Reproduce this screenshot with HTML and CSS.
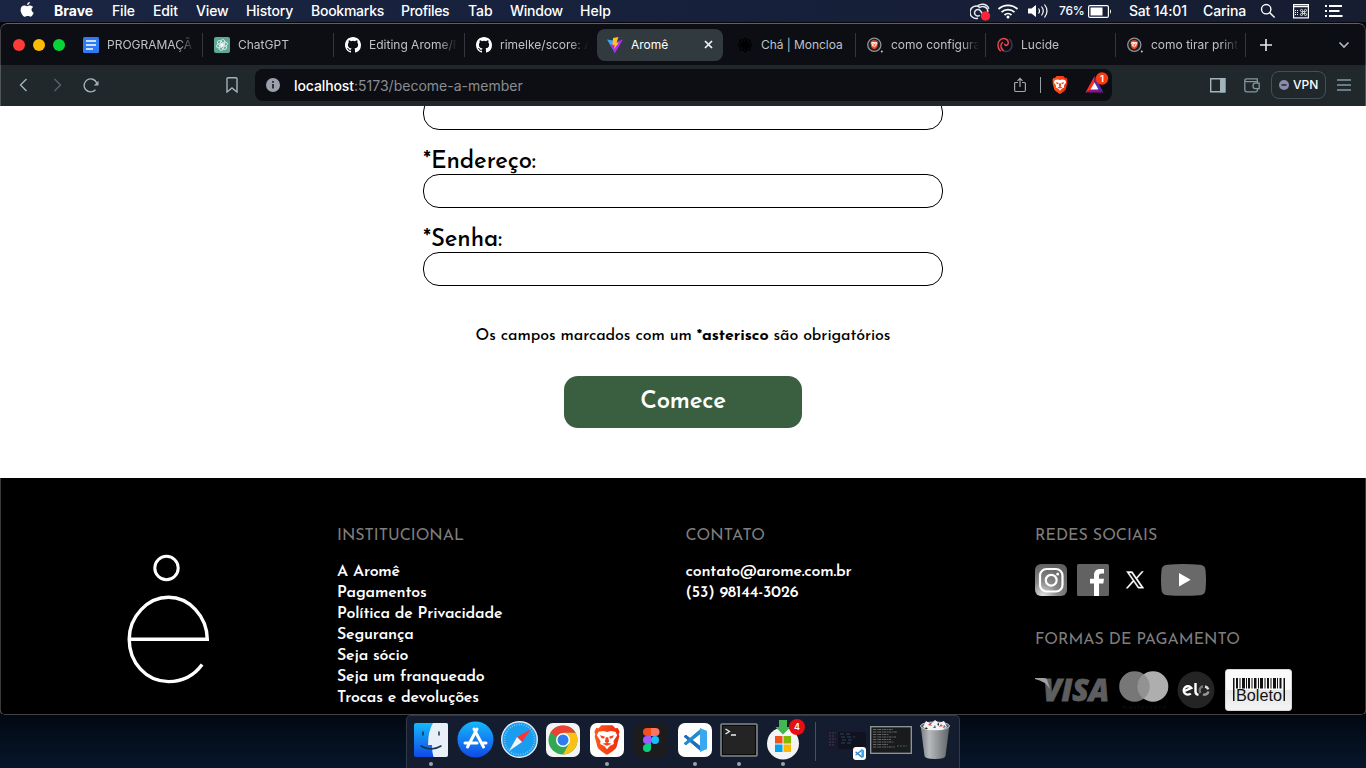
FILE: index.html
```html
<!DOCTYPE html>
<html lang="pt-BR">
<head>
<meta charset="utf-8">
<title>Aromê</title>
<link rel="stylesheet" href="styles.css">
</head>
<body>
<svg class="defs" width="0" height="0">
  <defs>
    <linearGradient id="gBrave" x1="0" x2="1"><stop offset="0" stop-color="#ff5a1c"/><stop offset="1" stop-color="#f02a10"/></linearGradient>
    <linearGradient id="gBlue" x2="0" y2="1"><stop offset="0" stop-color="#16b8fb"/><stop offset="1" stop-color="#1049e8"/></linearGradient>
    <linearGradient id="gTrash" x2="1"><stop offset="0" stop-color="#777c80"/><stop offset=".3" stop-color="#b6babd"/><stop offset=".65" stop-color="#8b8f92"/><stop offset="1" stop-color="#5e6366"/></linearGradient>
    <radialGradient id="gInsta" cx=".25" cy="1" r="1"><stop offset="0" stop-color="#e2e2e2"/><stop offset=".45" stop-color="#898989"/><stop offset="1" stop-color="#626262"/></radialGradient>
    <symbol id="github" viewBox="0 0 16 16"><path fill="#fff" d="M8 0C3.58 0 0 3.58 0 8c0 3.54 2.29 6.53 5.47 7.59.4.07.55-.17.55-.38v-1.49c-2.01.37-2.53-.49-2.69-.94-.09-.23-.48-.94-.82-1.13-.28-.15-.68-.52-.01-.53.63-.01 1.08.58 1.23.82.72 1.21 1.87.87 2.33.66.07-.52.28-.87.51-1.07-1.78-.2-3.64-.89-3.64-3.95 0-.87.31-1.59.82-2.15-.08-.2-.36-1.02.08-2.12 0 0 .67-.21 2.2.82a7.4 7.4 0 0 1 4 0c1.53-1.04 2.2-.82 2.2-.82.44 1.1.16 1.92.08 2.12.51.56.82 1.27.82 2.15 0 3.07-1.87 3.75-3.65 3.95.29.25.54.73.54 1.48v2.2c0 .21.15.46.55.38A8 8 0 0 0 16 8c0-4.42-3.58-8-8-8z"/></symbol>
    <symbol id="lion" viewBox="0 0 28 32"><path fill="url(#gBrave)" d="M8 0h12l3 3.400 2.600-.4 2 4-1 3 .7 2-3 11.500c-1 3-8 7-10.300 8.500C11.700 30.500 4.700 26.500 3.700 23.500L.700 12l.7-2-1-3 2-4L5 3.400z"/><path fill="#fff" d="M5 7l5-.7 4 1 4-1 5 .7 2 4-4 6 .4 3.300-4.400 2.200L14 26l-3-3.500-4.400-2.200.4-3.300-4-6z"/><path fill="#f8431a" d="M6.500 11l5 1.200-.5 2.500-3-.8zM21.500 11l-5 1.200.5 2.500 3-.8zM12.700 13h2.600l1 5-2.300 1.600L11.700 18zM9 20l5-1 5 1-5 2.300z"/></symbol>
    <symbol id="braveTab" viewBox="0 0 16 16"><circle cx="7.300" cy="7.800" r="6.600" fill="#1c2024" stroke="#8e9296" stroke-width="1.300"/><use href="#lion" x="3.300" y="3.100" width="8" height="9.300"/><circle cx="14.800" cy="14.500" r="1" fill="#ccc"/></symbol>
    <symbol id="vscode" viewBox="0 0 24 24"><path fill="#1c6fb8" stroke="#1c6fb8" stroke-width="1" stroke-linejoin="round" d="M1 8.500l2-1.300L18 19v4z"/><path fill="#2489ca" stroke="#2489ca" stroke-width="1" stroke-linejoin="round" d="M1 15.500l2 1.300L18 5V1z"/><path fill="#39a8ef" d="M17 0l7 3v18l-7 3z"/></symbol>
  </defs>
</svg>

<header class="menubar">
  <nav class="menus">
    <span class="apple"><svg width="14" height="16" viewBox="0 0 14 16"><path fill="#fff" d="M9.800 0c.1 1.300-1 3-2.700 3.100C6.900 1.700 8.300.2 9.800 0zM7.300 4.200c.7 0 1.500-.8 2.900-.7 1.200.1 2.300.6 2.900 1.600-2.300 1.500-1.900 4.600.6 5.600-.5 1.500-1.700 4-3.200 4-1 0-1.500-.6-2.800-.6-1.200 0-1.700.6-2.700.6C3.200 14.700.600 11 .600 7.900c0-2.800 1.800-4.300 3.500-4.300 1.400 0 2.400.600 3.200.600z"/></svg></span>
    <b class="m-brave">Brave</b><span class="m-file">File</span><span class="m-edit">Edit</span><span class="m-view">View</span><span class="m-history">History</span><span class="m-bookmarks">Bookmarks</span><span class="m-profiles">Profiles</span><span class="m-tab">Tab</span><span class="m-window">Window</span><span>Help</span>
  </nav>
  <div class="status">
    <svg class="s-cloud" width="22" height="18" viewBox="0 0 22 18"><g fill="none" stroke="#e8ebf2" stroke-width="1.500"><path d="M8 15.200A6.200 6.200 0 1 1 9.500 4M7 3.500c3-3.500 10-3 11.800 2.200"/><path d="M9.800 12.400a3.300 3.300 0 1 1 .8-4.400l2.400 3.500M9 5c4-3 9-1 8.800 4"/></g><circle cx="15.500" cy="13" r="4.700" fill="#ff2338"/></svg>
    <svg class="s-wifi" width="22" height="16" viewBox="0 0 22 16"><g fill="none" stroke="#fff" stroke-width="1.800"><path d="M1.500 6a14 14 0 0 1 19 0M4.500 9.100a9.600 9.600 0 0 1 13 0M7.500 12a5.200 5.200 0 0 1 7 0"/></g><circle cx="11" cy="14" r="1.500" fill="#fff"/></svg>
    <svg class="s-sound" width="22" height="16" viewBox="0 0 22 16"><path fill="#fff" d="M1 5.500h3.500L9 2v12l-4.500-3.500H1z"/><g fill="none" stroke="#fff" stroke-width="1.200"><path d="M11.500 5.500q2 2.500 0 5M14.500 3.500q3.500 4.500 0 9M17.500 1.500q5 6.500 0 13"/></g></svg>
    <span class="s-pct">76%</span>
    <svg class="s-batt" width="24" height="13" viewBox="0 0 24 13"><rect x=".6" y=".6" width="19.800" height="11.800" rx="1.500" fill="none" stroke="#fff" stroke-width="1.200"/><path fill="#fff" d="M2.500 2.500h12v8h-12zM22 4q2 2.500 0 5z"/></svg>
    <span class="s-clock">Sat 14:01</span><span class="s-user">Carina</span>
    <svg class="s-find" width="16" height="16" viewBox="0 0 16 16"><g fill="none" stroke="#fff" stroke-width="1.400"><circle cx="6.200" cy="6.200" r="4.700"/><path d="M9.600 9.600l5 5"/></g></svg>
    <svg class="s-kbd" width="16" height="15" viewBox="0 0 16 15"><rect x=".6" y=".6" width="14.800" height="13.300" fill="none" stroke="#fff" stroke-width="1.200"/><path stroke="#fff" stroke-width="1.500" d="M1 2.500h14"/><path stroke="#fff" stroke-dasharray="1 1" d="M2 6.500h4M2 8.500h4M2 10.500h4"/><g fill="none" stroke="#fff" stroke-width=".8"><circle cx="8.500" cy="6.500" r="1.100"/><circle cx="12.500" cy="6.500" r="1.100"/><circle cx="8.500" cy="10.500" r="1.100"/><circle cx="12.500" cy="10.500" r="1.100"/><path d="M9.500 7.500h2v2h-2z"/></g></svg>
    <svg class="s-list" width="18" height="14" viewBox="0 0 18 14"><path stroke="#fff" stroke-width="1.800" d="M4 2h13M4 7h10.500M4 12h13.500M0 2h2M0 7h2M0 12h2"/></svg>
  </div>
</header>

<section class="window">
  <div class="tabstrip">
    <div class="lights"><i class="red"></i><i class="yellow"></i><i class="green"></i></div>
    <div class="tabs">
      <div class="tab"><svg width="16" height="16"><rect width="16" height="16" rx="1.500" fill="#2f7bf5"/><path stroke="#fff" stroke-width="1.700" d="M3 4h10M3 8h10M3 12h7"/></svg><span class="title">PROGRAMAÇÃ</span></div>
      <div class="tab"><svg width="16" height="16" viewBox="0 0 16 16"><rect width="16" height="16" rx="2" fill="#5fa896"/><g fill="none" stroke="#fff" stroke-width=".7"><ellipse cx="8.800" cy="5.600" rx="2.100" ry="3.200"/><ellipse cx="8.800" cy="5.600" rx="2.100" ry="3.200" transform="rotate(60 8 8)"/><ellipse cx="8.800" cy="5.600" rx="2.100" ry="3.200" transform="rotate(120 8 8)"/><ellipse cx="8.800" cy="5.600" rx="2.100" ry="3.200" transform="rotate(180 8 8)"/><ellipse cx="8.800" cy="5.600" rx="2.100" ry="3.200" transform="rotate(240 8 8)"/><ellipse cx="8.800" cy="5.600" rx="2.100" ry="3.200" transform="rotate(300 8 8)"/></g></svg><span class="title">ChatGPT</span></div>
      <div class="tab"><svg width="16" height="16"><use href="#github"/></svg><span class="title">Editing Arome/R</span></div>
      <div class="tab plain"><svg width="16" height="16"><use href="#github"/></svg><span class="title">rimelke/score: A</span></div>
      <div class="tab plain active"><svg width="16" height="16" viewBox="0 0 16 16"><path fill="#3ea5f5" d="M0 2.400l8 1.400v3L8 16z"/><path fill="#b02cf5" d="M16 2.400L8 16 3.500 8l5-3z"/><path fill="#ffc31a" d="M11.500 0L6 1l-.5 7h2.200L7 12l4.800-6.300H9.500z"/></svg><span class="title">Aromê</span><svg class="close" width="9" height="9"><path stroke="#f2f4f5" stroke-width="1.700" d="M1 1l7 7M8 1L1 8"/></svg></div>
      <div class="tab"><svg width="16" height="16" viewBox="0 0 16 16"><g fill="none" stroke="#010102" stroke-width="1.200"><path d="M8 1l2 2-2 2-2-2zM13 6l2 2-2 2-2-2zM3 6l2 2-2 2-2-2zM8 11l2 2-2 2-2-2zM3 3h3v3H3zM10 3h3v3h-3zM3 10h3v3H3zM10 10h3v3h-3z"/></g><circle cx="8" cy="8" r="3.500" fill="#010102"/></svg><span class="title full">Chá | Moncloa</span></div>
      <div class="tab"><svg width="16" height="16"><use href="#braveTab"/></svg><span class="title">como configura</span></div>
      <div class="tab"><svg width="16" height="16" viewBox="0 0 16 16"><g fill="none" stroke-width="1.500" stroke-linecap="round"><path stroke="#e8434e" d="M3.300 13.800C.2 11 .2 5.500 3 3 6 .2 11 1.500 11.300 5.500c.1 3-3 3.800-3.500 1.800"/><path stroke="#363a5e" d="M12.700 2.200c3 2.800 3 8.300.3 10.800-3 2.800-8 1.500-8.300-2.500"/><path stroke="#e8434e" d="M6.200 13.500C3 11.500 3.500 7 5.500 5.500"/></g></svg><span class="title">Lucide</span></div>
      <div class="tab"><svg width="16" height="16"><use href="#braveTab"/></svg><span class="title">como tirar print</span></div>
    </div>
    <svg class="plus" width="12" height="12"><path stroke="#e8eaec" stroke-width="1.600" d="M6 0v12M0 6h12"/></svg>
    <svg class="chev" width="12" height="8"><path fill="none" stroke="#a9b9bf" stroke-width="1.700" d="M1.500 1.500L6 6l4.500-4.500"/></svg>
  </div>

  <div class="toolbar">
    <svg class="back" width="9" height="14"><path fill="none" stroke="#9fb4bb" stroke-width="1.400" d="M7.500 1L1.500 7l6 6"/></svg>
    <svg class="fwd" width="9" height="14"><path fill="none" stroke="#56636a" stroke-width="1.400" d="M1.500 1l6 6-6 6"/></svg>
    <svg class="reload" width="17" height="16"><path fill="none" stroke="#9fb4bb" stroke-width="1.400" d="M12.500 12.700a6.500 6.500 0 1 1 1.200-6.700"/><path fill="#9fb4bb" d="M15.500 3.800v4.700h-4.700z"/></svg>
    <svg class="mark" width="12" height="16"><path fill="none" stroke="#9fb4bb" stroke-width="1.400" d="M1 1.700q0-1 1-1h8q1 0 1 1V15l-5-4-5 4z"/></svg>
    <div class="address">
      <svg class="info" width="14" height="14"><circle cx="7" cy="7" r="7" fill="#9ca0ad"/><path stroke="#0d0e14" stroke-width="1.500" d="M7 6v4.500M7 3v1.700"/></svg>
      <span class="url"><b>localhost</b>:5173/become-a-member</span>
      <svg class="share" width="12" height="16"><path fill="none" stroke="#a3a6ab" stroke-width="1.200" d="M4 5.500H1.600q-1 0-1 1V13q0 1.500 1 1.500h8.800q1 0 1-1.500V6.500q0-1-1-1H8M6 10V1.500M3.500 3.800L6 1.300l2.500 2.500"/></svg>
      <i class="bar"></i>
      <svg class="shield" width="16" height="18"><use href="#lion"/></svg>
      <svg class="bat" width="24" height="24" viewBox="0 0 24 24"><path fill="#ff2d20" d="M9.500 5L.5 21.500l9-4z"/><path fill="#86148f" d="M.5 21.500h18l-9-4.500z"/><path fill="#5c2cb0" d="M9.500 5l9 16.500-9-5z"/><path fill="#fff" d="M9.500 11.500l4 7h-8z"/><circle cx="17" cy="7.500" r="6.200" fill="#fb3b0c"/><text x="17" y="11" class="count">1</text></svg>
    </div>
    <svg class="side" width="16" height="15"><path fill="none" stroke="#a2b5bc" stroke-width="1.400" d="M.7.7h14v13H.7z"/><path fill="#a2b5bc" d="M10 0h5.500v14.500H10z"/></svg>
    <svg class="wallet" width="16" height="15"><g fill="none" stroke="#82969e" stroke-width="1.300"><path d="M13.500 5V3.700H2.500q-1.700-.2-1.700-1.500T2.500.8h10.800v2.900M.8 2.500v9.300q0 2 2 2h9q1.700 0 1.700-1.700V11"/><path d="M15.200 5.200v5.400h-4q-2.200-.2-2.200-2.700t2.200-2.700z"/></g></svg>
    <div class="vpn"><svg width="10" height="10"><circle cx="5" cy="5" r="5" fill="#888ca8"/><path stroke="#20282b" stroke-width="1.500" d="M2.500 5h5"/></svg>VPN</div>
    <svg class="burger" width="14" height="12"><path stroke="#8298a0" stroke-width="1.300" d="M0 1h14M0 6h14M0 11h14"/></svg>
  </div>

  <div class="page">
    <main>
      <form class="member">
        <input type="text">
        <label for="end">*Endereço:</label><input id="end" type="text">
        <label for="senha">*Senha:</label><input id="senha" type="password">
        <p class="note">Os campos marcados com um <b>*asterisco</b> são obrigatórios</p>
        <button type="button">Comece</button>
      </form>
    </main>
    <footer>
      <div class="brand"><svg width="84" height="132" viewBox="0 0 84 132"><g fill="none" stroke="#fff" stroke-width="3"><circle cx="39.500" cy="14" r="11.700"/><path stroke-width="3.400" d="M2.500 85.300H80.300C80 62 62 43.300 41.500 43.300S2.200 62 2.200 85.300s17 42.300 39.300 42.300c14 0 26-6.600 33.600-17.100"/></g></svg></div>
      <div class="col">
        <h2>INSTITUCIONAL</h2>
        <ul><li>A Aromê</li><li>Pagamentos</li><li>Política de Privacidade</li><li>Segurança</li><li>Seja sócio</li><li>Seja um franqueado</li><li>Trocas e devoluções</li></ul>
      </div>
      <div class="col">
        <h2>CONTATO</h2>
        <ul><li>contato@arome.com.br</li><li>(53) 98144-3026</li></ul>
      </div>
      <div class="col">
        <h2>REDES SOCIAIS</h2>
        <div class="social">
          <svg width="32" height="32"><rect width="32" height="32" rx="6" fill="url(#gInsta)"/><g fill="none" stroke="#fff" stroke-width="2.200"><rect x="5" y="5" width="22.500" height="22.500" rx="6.500"/><circle cx="16.200" cy="16.200" r="5.400"/></g><circle cx="22.700" cy="10" r="1.500" fill="#fff"/></svg>
          <svg width="32" height="32"><rect width="32" height="32" rx="1.500" fill="#626262"/><path fill="#fff" d="M17 32V19.500h-4v-4.700h4v-3.500C17 7 19.500 5 23 5h4v4.500h-2.500c-2 0-2.500 1-2.500 2.500v2.800h5l-.7 4.700H22V32z"/></svg>
          <svg width="32" height="32"><path fill="#fff" stroke="#fff" stroke-width=".4" fill-rule="evenodd" d="M7.500 7.500h5.800l4.100 5.900 5.300-5.900h1.700l-6.200 7 6.700 9.700h-5.800l-4.500-6.500-5.800 6.500H7.100l6.700-7.600zM10 8.900l9.800 14h2.500L12.600 8.900z"/></svg>
          <svg width="45" height="32"><path fill="#696969" d="M6 .8Q22 -.6 39 .8q5 .5 5.500 5.200 1 10 0 20-.5 4.700-5.500 5.200-16.500 1.200-33 0-5-.5-5.500-5.200Q-.5 16 .5 6 1 1.300 6 .8z"/><path fill="#fff" d="M18 9v13.500l11.700-6.700z"/></svg>
        </div>
        <h2>FORMAS DE PAGAMENTO</h2>
        <div class="pay">
          <svg class="visa" width="75" height="26"><text x="8" y="23" textLength="66" lengthAdjust="spacingAndGlyphs">VISA</text><path fill="#a0a0a0" d="M0 0h9q3 0 3.500 3l2.500 8Q10 3 0 1z"/></svg>
          <svg class="mc" width="50" height="40"><circle cx="15.500" cy="15.500" r="15.300" fill="#777"/><circle cx="34" cy="15.500" r="15.300" fill="#aeaeae"/><path fill="#929292" d="M24.700 3.300a15.300 15.300 0 0 1 0 24.400 15.300 15.300 0 0 1 0-24.400z"/><text x="3" y="38" textLength="44">mastercard</text></svg>
          <svg class="elo" width="38" height="38"><circle cx="19" cy="19" r="18.500" fill="#242424"/><g fill="none" stroke="#fff" stroke-width="2.400"><path d="M6.300 20.500l8-3.500a4.200 4.200 0 1 0-.5 5.500M18.500 12v8.500q0 3 3 3.200"/><path d="M23.500 22a4.200 4.200 0 0 1 2.500-6.700" stroke="#777"/><path d="M28 15.500a4.200 4.200 0 0 1 3.300 2.800" stroke="#ddd"/><path d="M31.500 20.500a4.200 4.200 0 0 1-5.500 2.900" stroke="#999"/></g></svg>
          <div class="boleto"><svg width="53" height="26"><path fill="#111" d="M0 0h1.500v23H0zM50.500 0H52v23h-1.500zM3 0h2v10.500H3zM6.500 0h1v10.500h-1zM9 0h3v10.500H9zM13 0h1v10.500h-1zM15 0h2v10.500h-2zM18.500 0h1v10.500h-1zM21 0h2.500v10.500H21zM25 0h1v10.500h-1zM27 0h3v10.500h-3zM31.500 0h1v10.500h-1zM34 0h2v10.500h-2zM37.500 0h1v10.500h-1zM40 0h3v10.500h-3zM44 0h1v10.500h-1zM46.500 0h2v10.500h-2z"/><text x="3" y="22.500" textLength="46" lengthAdjust="spacingAndGlyphs">Boleto</text></svg></div>
        </div>
      </div>
    </footer>
  </div>
</section>

<div class="dock">
  <div class="app on"><svg width="34" height="34"><rect width="34" height="34" rx="2" fill="url(#gBlue)"/><path fill="#e9eff6" d="M19 0h13q2 0 2 2v30q0 2-2 2H19.500q-1.500-5-1.500-12h-4Q14 8 19 0z"/><path fill="none" stroke="#173452" stroke-width="1.500" stroke-linecap="round" d="M9 9v3M25 9v3M7 23q10 6 20 0"/></svg></div>
  <div class="app"><svg class="lift" width="37" height="37"><circle cx="18.500" cy="18.500" r="18" fill="url(#gBlue)"/><path fill="none" stroke="#fff" stroke-width="3" stroke-linecap="round" d="M17 8l9.500 18M20 8L10.500 26M8 22h12M25 22h4"/></svg></div>
  <div class="app"><svg class="lift" width="37" height="37"><circle cx="18.500" cy="18.500" r="17.800" fill="#1a9cf1" stroke="#e5eaf0" stroke-width="1.400"/><circle cx="18.500" cy="18.500" r="15" fill="none" stroke="#8fd0fb" stroke-width="1.500" stroke-dasharray=".8 1.600"/><path fill="#f33" d="M30 8L16 16l5 5z"/><path fill="#f4f5f7" d="M8 30l8-14 5 5z"/></svg></div>
  <div class="app"><svg width="34" height="34"><rect width="34" height="34" rx="7" fill="#f4f4f4"/><circle cx="17" cy="17" r="14.500" fill="#32a852"/><path fill="#ea4335" d="M17 17L4.400 9.800A14.500 14.500 0 0 1 29.600 9.800H17z"/><path fill="#fbc116" d="M17 9.800h12.600A14.500 14.500 0 0 1 17 31.500l6.200-11z"/><circle cx="17" cy="17" r="7" fill="#fff"/><circle cx="17" cy="17" r="5.500" fill="#2e7cf0"/></svg></div>
  <div class="app on"><svg width="34" height="34"><rect width="34" height="34" rx="7" fill="#fff"/><use href="#lion" x="4" y="2" width="26" height="30"/></svg></div>
  <div class="app"><svg width="34" height="34"><rect width="34" height="34" rx="7" fill="#1c1c1e"/><path fill="#f24e1e" d="M17 5h-4a4 4 0 0 0 0 8h4z"/><path fill="#ff7262" d="M17 5h4.500a4 4 0 0 1 0 8H17z"/><path fill="#a259ff" d="M17 13h-4a4 4 0 0 0 0 8h4z"/><circle cx="21" cy="17" r="4" fill="#1abcfe"/><path fill="#0acf83" d="M17 21h-4a4 4 0 1 0 4 4z"/></svg></div>
  <div class="app on"><svg width="34" height="34"><rect width="34" height="34" rx="7" fill="#fff"/><use href="#vscode" x="5" y="5" width="24" height="24"/></svg></div>
  <div class="app on"><svg width="38" height="34"><rect x="1" y="1" width="36" height="32" rx="1" fill="#242424" stroke="#7e868a" stroke-width="1.600"/><rect x="2.500" y="2.500" width="33" height="29" fill="none" stroke="#0a0a0a"/><path fill="none" stroke="#eee" stroke-width="1.300" d="M5.500 6l4 2.500-4 2.500M11 12h5"/></svg></div>
  <div class="app on"><svg width="40" height="42" viewBox="0 0 40 42" class="ms"><circle cx="20" cy="24.500" r="16" fill="#f4f4f5"/><path fill="#f1511b" d="M12 17h7.500v7.500H12z"/><path fill="#7fba00" d="M20.500 17H28v7.500h-7.500z"/><path fill="#00a3ee" d="M12 25.500h7.500V33H12z"/><path fill="#fbb900" d="M20.500 25.500H28V33h-7.500z"/><path fill="#42b650" d="M16 1h8v7h3.500L20 15.500 12.500 8H16z"/></svg><em class="badge">4</em></div>
  <i class="sep"></i>
  <div class="mini code"><svg width="39" height="21"><rect width="39" height="21" fill="#171a2f"/><path fill="#10121f" d="M11 2h28v17H11z"/><path stroke="#60405c" stroke-width=".8" stroke-dasharray="2 1" d="M2 3h7M2 6h5M2 9h7M2 12h5M2 15h6"/><path stroke="#34566d" stroke-width=".8" stroke-dasharray="4 2" d="M13 4h11M14 7h14M15 10h10M14 13h12"/></svg><svg class="mbadge" width="13" height="13"><rect width="13" height="13" rx="3" fill="#fff"/><use href="#vscode" x="2" y="2" width="9" height="9"/></svg></div>
  <div class="mini"><svg width="42" height="28"><rect x=".7" y=".7" width="40.600" height="26.600" fill="#1a1b1c" stroke="#939a9e" stroke-width="1.300"/><path stroke="#777a7c" stroke-width=".8" stroke-dasharray="3 .7 1 .5" d="M3 3.500h20M3 6h24M3 8.500h16M3 11h23M3 13.500h18M3 16h21M3 18.500h15M3 21h22"/><path stroke="#366b42" stroke-dasharray="2 1" d="M27 20h10"/></svg></div>
  <div class="trash"><svg width="32" height="40"><path fill="url(#gTrash)" d="M1.500 5h29l-4 31q-.5 3-10.500 3T5.500 36z"/><ellipse cx="16" cy="6" rx="14.500" ry="4" fill="#555b5f" stroke="#c9ccce"/><path fill="#f3f3f3" d="M4 7l3-6 5 3 4-4 4 3 5-2 3 6-5 3H9z"/><path fill="#d34b4b" d="M9 5l2-2 2 3zM20 7l2-3 2 2z"/><path fill="#2f73b6" d="M14 8l2-3 1 3zM24 8l1-3 2 2z"/><path fill="#222" d="M7 7l2 2H6zM18 4l2-1v3z"/></svg></div>
</div>
</body>
</html>
```

FILE: styles.css
```css
* { box-sizing: border-box; }
body {
  margin: 0;
  width: 1366px;
  height: 768px;
  overflow: hidden;
  position: relative;
  display: flex;
  flex-direction: column;
  background: linear-gradient(#020812 715px, #07162b);
  font-family: Inter, sans-serif;
}
svg { display: block; flex: none; }
.defs { position: absolute; }

/* system menu bar */
.menubar {
  height: 23px;
  flex: none;
  display: flex;
  justify-content: space-between;
  background: linear-gradient(90deg, #1a2543, #16203a 55%, #161d31);
  border-bottom: 1px solid #05070c;
  color: #fff;
  font-size: 14px;
  font-weight: 500;
  line-height: 22px;
  white-space: nowrap;
}
.menus { display: flex; padding-left: 20px; }
.apple { width: 34px; padding-top: 2px; }
.m-brave { width: 58px; font-weight: 700; }
.m-file { width: 41px; }
.m-edit { width: 43px; }
.m-view { width: 50px; }
.m-history { width: 65px; }
.m-bookmarks { width: 90px; letter-spacing: -.25px; }
.m-profiles { width: 67px; letter-spacing: -.3px; }
.m-tab { width: 42px; }
.m-window { width: 70px; letter-spacing: -.25px; }
.m-history, .m-view, .m-edit, .m-file { letter-spacing: -.15px; }
.status { display: flex; align-items: center; width: 396px; }
.s-cloud { margin: 2px 5px 0 0; }
.s-wifi { margin-right: 8px; }
.s-sound { margin-right: 10px; }
.s-pct { width: 29px; font-size: 12px; letter-spacing: -.2px; }
.s-batt { margin-right: 17px; }
.s-clock { width: 74px; letter-spacing: -.2px; }
.s-user { width: 57px; letter-spacing: -.1px; }
.s-find { margin-right: 17px; }
.s-kbd { margin-right: 16px; }

/* browser window; its hairline edge is translucent and lies over the page */
.window {
  position: relative;
  width: 1366px;
  height: 692px;
  flex: none;
  padding: 1px 0;
  border-radius: 7px 7px 5px 5px;
  overflow: hidden;
  background: #0d0e13;
}
.window::after {
  content: "";
  position: absolute;
  inset: 0;
  border: 1px solid rgba(255, 255, 255, .22);
  border-top-color: rgba(255, 255, 255, .34);
  border-radius: 7px 7px 5px 5px;
  pointer-events: none;
}
.tabstrip { height: 41px; padding-left: 1px; display: flex; align-items: center; }
.lights { width: 71px; display: flex; gap: 8px; padding-left: 12px; flex: none; }
.lights i { width: 12px; height: 12px; border-radius: 50%; }
.red { background: #ff3b38; }
.yellow { background: #fdbc05; }
.green { background: #07d438; }
.tabs { width: 1174px; display: grid; grid-template-columns: 131px 131px 131px 131px repeat(5, 130px); flex: none; }
.tab {
  height: 24px;
  display: flex;
  align-items: center;
  gap: 8px;
  padding-left: 11px;
  border-right: 1px solid #33373b;
  color: #bfc2c5;
  font-size: 12px;
  min-width: 0;
}
.title {
  width: 88px;
  overflow: hidden;
  white-space: nowrap;
  line-height: 18px;
  -webkit-mask-image: linear-gradient(90deg, #000 70px, transparent 88px);
  mask-image: linear-gradient(90deg, #000 70px, transparent 88px);
}
.full { -webkit-mask-image: none; mask-image: none; letter-spacing: -.05px; }
.plain { border-right-color: transparent; }
.active {
  height: 32px;
  width: 126px;
  margin: -4px 0 -4px 1px;
  padding-left: 10px;
  background: #303a3f;
  border: 0;
  border-radius: 8px;
  color: #fff;
}
.active .title { width: 65px; -webkit-mask-image: none; mask-image: none; }
.plus { margin-left: 14px; }
.chev { margin-left: 66px; }

.toolbar { height: 41px; padding-left: 1px; display: flex; align-items: center; background: #20282b; }
.toolbar > svg { margin-top: -1px; }
.toolbar .back { margin-left: 18px; }
.toolbar .fwd { margin-left: 25px; }
.toolbar .reload { margin-left: 21px; }
.toolbar .mark { margin-left: 126px; }
.address {
  width: 857px;
  height: 32px;
  margin: -1px 0 0 17px;
  padding-left: 11px;
  display: flex;
  align-items: center;
  background: #0d0e13;
  border-radius: 8px;
}
.url { width: 720px; margin-left: 14px; color: #898c91; font-size: 14px; letter-spacing: .01px; }
.url b { color: #fff; font-weight: 500; letter-spacing: -.1px; }
.bar { width: 1px; height: 16px; margin: 0 11px 0 14px; background: #9a9da2; }
.bat { margin: -4px 0 0 17px; }
.count { fill: #fff; font-size: 9.500px; font-weight: 600; text-anchor: middle; }
.toolbar .side { margin-left: 98px; }
.toolbar .wallet { margin-left: 18px; }
.vpn {
  width: 55px;
  height: 28px;
  margin: -2px 0 0 11px;
  padding-left: 7px;
  display: flex;
  align-items: center;
  gap: 4px;
  border: 1px solid #435055;
  border-radius: 8px;
  color: #fff;
  font-size: 12px;
  font-weight: 500;
}
.toolbar .burger { margin-left: 11px; }

/* web page */
.page { height: 608px; overflow: hidden; background: #fff; font-family: "Josefin Sans", Lato, sans-serif; }
main { height: 372px; overflow: hidden; }
.member { width: 520px; margin: -10px auto 0; display: flex; flex-direction: column; align-items: center; }
input { width: 520px; height: 34px; border: 1px solid #000; border-radius: 16px; background: #fff; }
label { width: 520px; height: 44px; padding-top: 16px; font-size: 24px; line-height: 32px; font-weight: 500; letter-spacing: -.12px; }
.note { margin: 38px 0 0; font-size: 16px; line-height: 24px; font-weight: 500; letter-spacing: -.08px; white-space: nowrap; }
.note b { font-weight: 700; }
button {
  width: 238px;
  height: 52px;
  margin-top: 28px;
  padding: 0;
  border: 0;
  border-radius: 14px;
  background: #3a5f40;
  color: #fff;
  font: 600 24px "Josefin Sans", Lato, sans-serif;
  letter-spacing: -.25px;
}
footer { height: 237px; display: grid; grid-template-columns: 337px 348.500px 349.500px 1fr; background: #000; color: #fff; }
.brand { padding: 76px 0 0 127px; }
.col { padding-top: 47px; }
h2 { margin: 0; color: #7e7e7e; font-size: 16px; line-height: 22px; font-weight: 400; white-space: nowrap; }
ul { margin: 15px 0 0; padding: 0; list-style: none; font-size: 16px; font-weight: 600; line-height: 21px; letter-spacing: -.19px; }
.social { display: flex; gap: 10px; margin: 17px 0 33px; }
.pay { display: flex; align-items: flex-start; margin-top: 18px; }
.visa { margin-top: 9px; }
.visa text { fill: #5e5e5e; stroke: #5e5e5e; stroke-width: .8px; font: italic 800 30px "Open Sans", sans-serif; }
.mc { margin: 2px 0 0 9px; }
.mc text { fill: #121212; font-size: 6px; }
.elo { margin: 2px 0 0 8px; }
.boleto {
  width: 67px;
  height: 42px;
  margin-left: 10px;
  padding: 8px 0 0 7px;
  border-radius: 3px;
  border: 1px solid #d6d6d6;
  background: linear-gradient(#fafafa 50%, #e6e6e6 51%, #f4f4f4);
}
.boleto text { font: 16px "Liberation Sans", sans-serif; fill: #111; }

/* dock floats over the desktop wallpaper */
.dock {
  position: absolute;
  left: 406px;
  bottom: 0;
  width: 554px;
  height: 53px;
  padding-left: 2px;
  display: flex;
  background: #141d2f;
  border: 1px solid #313a49;
  border-bottom: 0;
  border-radius: 5px 5px 0 0;
}
.app { position: relative; width: 44px; height: 52px; padding-top: 7px; display: flex; flex-direction: column; align-items: center; flex: none; }
.lift { margin-top: -2px; }
.ms { margin-top: -4px; }
.on::after { content: ""; position: absolute; left: 20px; top: 46px; width: 4px; height: 4px; border-radius: 50%; background: #9ba1ae; }
.badge { position: absolute; left: 28px; top: 3px; width: 16px; height: 16px; border-radius: 50%; background: #e60f12; color: #fff; font-style: normal; font-size: 9px; font-weight: 600; line-height: 16px; text-align: center; }
.sep { width: 1px; height: 39px; margin: 6px 11px 0 10px; background: #465061; }
.mini { position: relative; margin-top: 10px; margin-right: 7px; }
.code { margin: 14px 4px 0 0; }
.mbadge { position: absolute; left: 26px; top: 17px; }
.trash { padding-top: 4px; }
```
